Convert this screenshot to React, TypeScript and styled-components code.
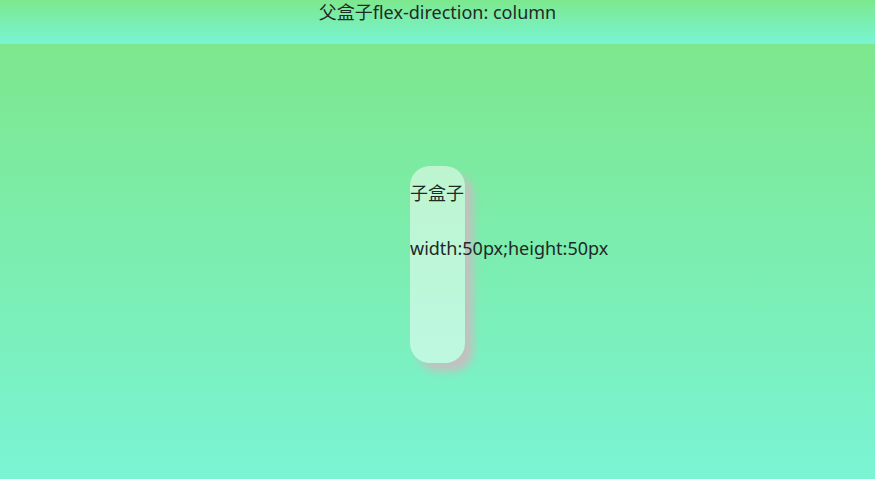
import React from 'react';
import styled, { createGlobalStyle } from 'styled-components';

const GlobalStyle = createGlobalStyle`
  html, body {
    margin: 0;
    padding: 0;
    height: 100%;
  }
  body {
    font-family: "Noto Sans", "Noto Sans CJK SC", sans-serif;
    font-size: 18px;
    color: #1f2a26;
  }
  #root {
    height: 100%;
  }
`;

const Page = styled.div`
  display: flex;
  flex-direction: column;
  height: 100vh;
`;

const Header = styled.header`
  height: 44px;
  flex-shrink: 0;
  text-align: center;
  line-height: 24px;
  background: linear-gradient(to bottom, #7de88e, #78f5d4);
`;

const Main = styled.main`
  flex: 1;
  display: flex;
  flex-direction: column;
  align-items: center;
  justify-content: center;
  padding-top: 6px;
  background: linear-gradient(to bottom, #7de78d, #7af4d4);
`;

const Child = styled.div`
  width: 55px;
  height: 197px;
  box-sizing: border-box;
  padding-top: 15px;
  display: flex;
  flex-direction: column;
  gap: 31px;
  border-radius: 20px;
  background: rgba(255, 255, 255, 0.5);
  box-shadow: 8px 8px 8px #c4c0c0;
`;

const Line = styled.p`
  margin: 0;
  line-height: 24px;
  white-space: nowrap;
`;

const App: React.FC = () => {
  return (
    <>
      <GlobalStyle />
      <Page>
        <Header>父盒子flex-direction: column</Header>
        <Main>
          <Child>
            <Line>子盒子</Line>
            <Line>width:50px;height:50px</Line>
          </Child>
        </Main>
      </Page>
    </>
  );
};

export default App;
